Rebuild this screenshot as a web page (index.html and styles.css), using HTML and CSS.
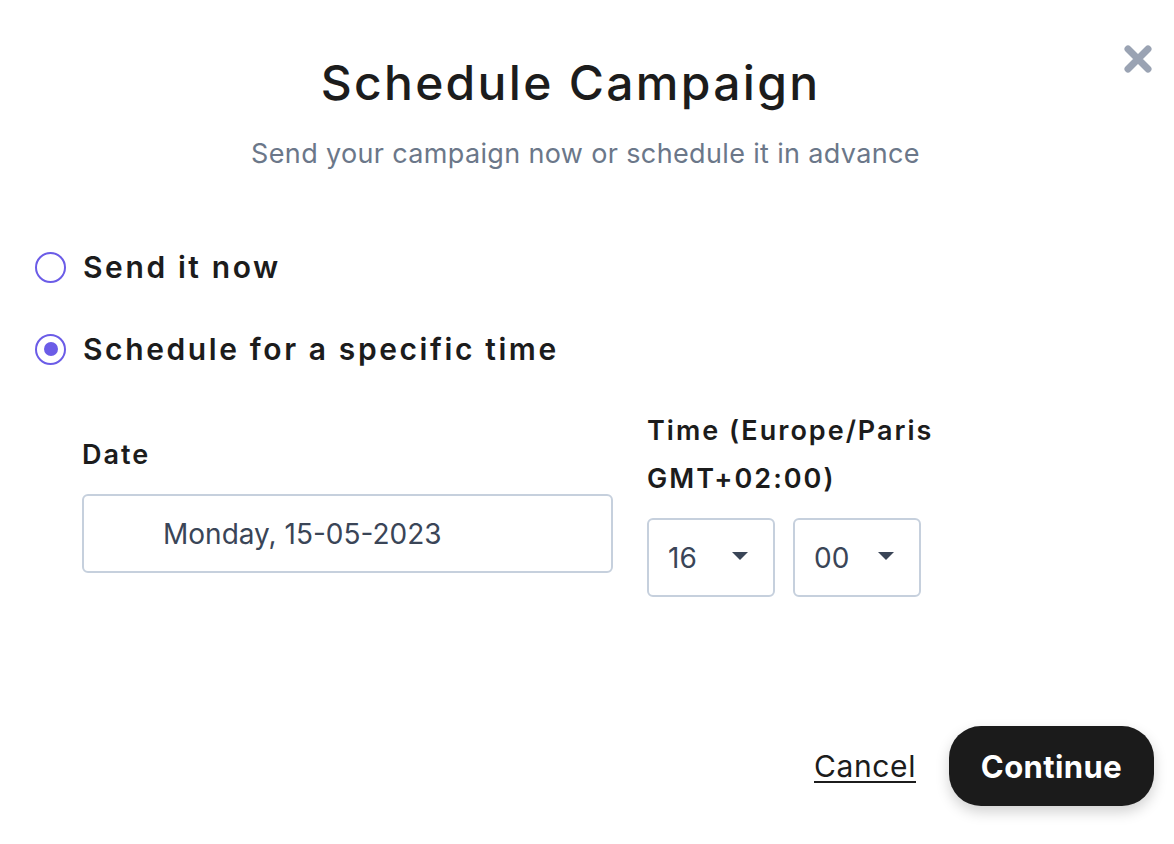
FILE: index.html
```html
<!DOCTYPE html>
<html lang="en">
<head>
<meta charset="utf-8">
<title>Schedule Campaign</title>
<link rel="stylesheet" href="styles.css">
</head>
<body>
<div class="modal">
  <button class="close" aria-label="Close">
    <svg width="30" height="30" viewBox="0 0 30 30"><path d="M5 5 L25 25 M25 5 L5 25" stroke="#9aa3b3" stroke-width="7" stroke-linecap="round"/></svg>
  </button>
  <header class="head">
    <h1 class="title">Schedule Campaign</h1>
    <p class="subtitle">Send your campaign now or schedule it in advance</p>
  </header>
  <div class="options">
    <label class="option"><span class="radio"></span><span class="opt-text">Send it now</span></label>
    <label class="option"><span class="radio checked"></span><span class="opt-text">Schedule for a specific time</span></label>
  </div>
  <div class="fields">
    <div class="field date-field">
      <div class="label">Date</div>
      <div class="input">Monday, 15-05-2023</div>
    </div>
    <div class="field time-field">
      <div class="label">Time (Europe/Paris GMT+02:00)</div>
      <div class="selects">
        <div class="select"><span>16</span><span class="caret"></span></div>
        <div class="select"><span>00</span><span class="caret"></span></div>
      </div>
    </div>
  </div>
  <footer class="foot">
    <a class="cancel" href="#">Cancel</a>
    <button class="continue">Continue</button>
  </footer>
</div>
</body>
</html>
```

FILE: styles.css
```css
* { box-sizing: border-box; }
body {
  margin: 0;
  background: #ffffff;
  font-family: Inter, "Noto Sans", sans-serif;
  color: #1c1c1c;
}
.modal {
  position: relative;
  width: 1174px;
  height: 844px;
  padding: 56px 20px 0 35px;
}
.close {
  position: absolute;
  top: 44px;
  right: 21px;
  width: 30px;
  height: 30px;
  padding: 0;
  border: 0;
  background: none;
}
.close svg { display: block; }
.head {
  text-align: center;
}
.title {
  margin: 0;
  padding-right: 48px;
  font-size: 48px;
  line-height: 53px;
  font-weight: 500;
  letter-spacing: 2.3px;
  color: #1c1c1c;
}
.subtitle {
  margin: 26px 0 0;
  padding-right: 18px;
  font-size: 27px;
  line-height: 38px;
  color: #6b7789;
  letter-spacing: 0.35px;
}
.options {
  display: flex;
  flex-direction: column;
  gap: 46px;
  margin-top: 76px;
}
.option {
  display: flex;
  align-items: center;
  gap: 17px;
  height: 36px;
}
.radio {
  width: 31px;
  height: 31px;
  border-radius: 50%;
  border: 2px solid #6b5ce7;
  display: flex;
  align-items: center;
  justify-content: center;
}
.radio.checked::after {
  content: "";
  width: 14px;
  height: 14px;
  border-radius: 50%;
  background: #6b5ce7;
}
.opt-text {
  font-size: 30px;
  font-weight: 600;
  letter-spacing: 2.6px;
  color: #1c1c1c;
}
.fields {
  display: flex;
  align-items: center;
  gap: 34px;
  margin-top: 40px;
  padding-left: 47px;
}
.field {
  display: flex;
  flex-direction: column;
  gap: 15px;
}
.label {
  font-size: 27px;
  line-height: 48px;
  font-weight: 600;
  letter-spacing: 2px;
  color: #1c1c1c;
}
.date-field { width: 531px; }
.time-field { width: 290px; }
.input {
  height: 79px;
  border: 2px solid #c6d0dd;
  border-radius: 6px;
  padding-left: 79px;
  display: flex;
  align-items: center;
  font-size: 28px;
  color: #3a4557;
}
.selects {
  display: flex;
  gap: 18px;
}
.select {
  width: 128px;
  height: 79px;
  border: 2px solid #c6d0dd;
  border-radius: 6px;
  display: flex;
  align-items: center;
  justify-content: space-between;
  padding: 0 25px 0 19px;
  font-size: 28px;
  color: #3a4557;
}
.caret {
  width: 0;
  height: 0;
  border-left: 8px solid transparent;
  border-right: 8px solid transparent;
  border-top: 8px solid #3a4557;
  margin-top: -4px;
}
.foot {
  display: flex;
  justify-content: flex-end;
  align-items: center;
  gap: 33px;
  margin-top: 129px;
}
.cancel {
  font-size: 30px;
  letter-spacing: 0.6px;
  color: #1c1c1c;
  text-decoration: underline;
  text-underline-offset: 4px;
  text-decoration-thickness: 2px;
}
.continue {
  height: 80px;
  width: 205px;
  border: 0;
  border-radius: 32px;
  background: #1b1b1b;
  color: #ffffff;
  font-family: Inter, "Noto Sans", sans-serif;
  font-size: 31px;
  font-weight: 700;
  letter-spacing: 0.4px;
  box-shadow: 0 6px 14px rgba(0, 0, 0, 0.18);
}
```
